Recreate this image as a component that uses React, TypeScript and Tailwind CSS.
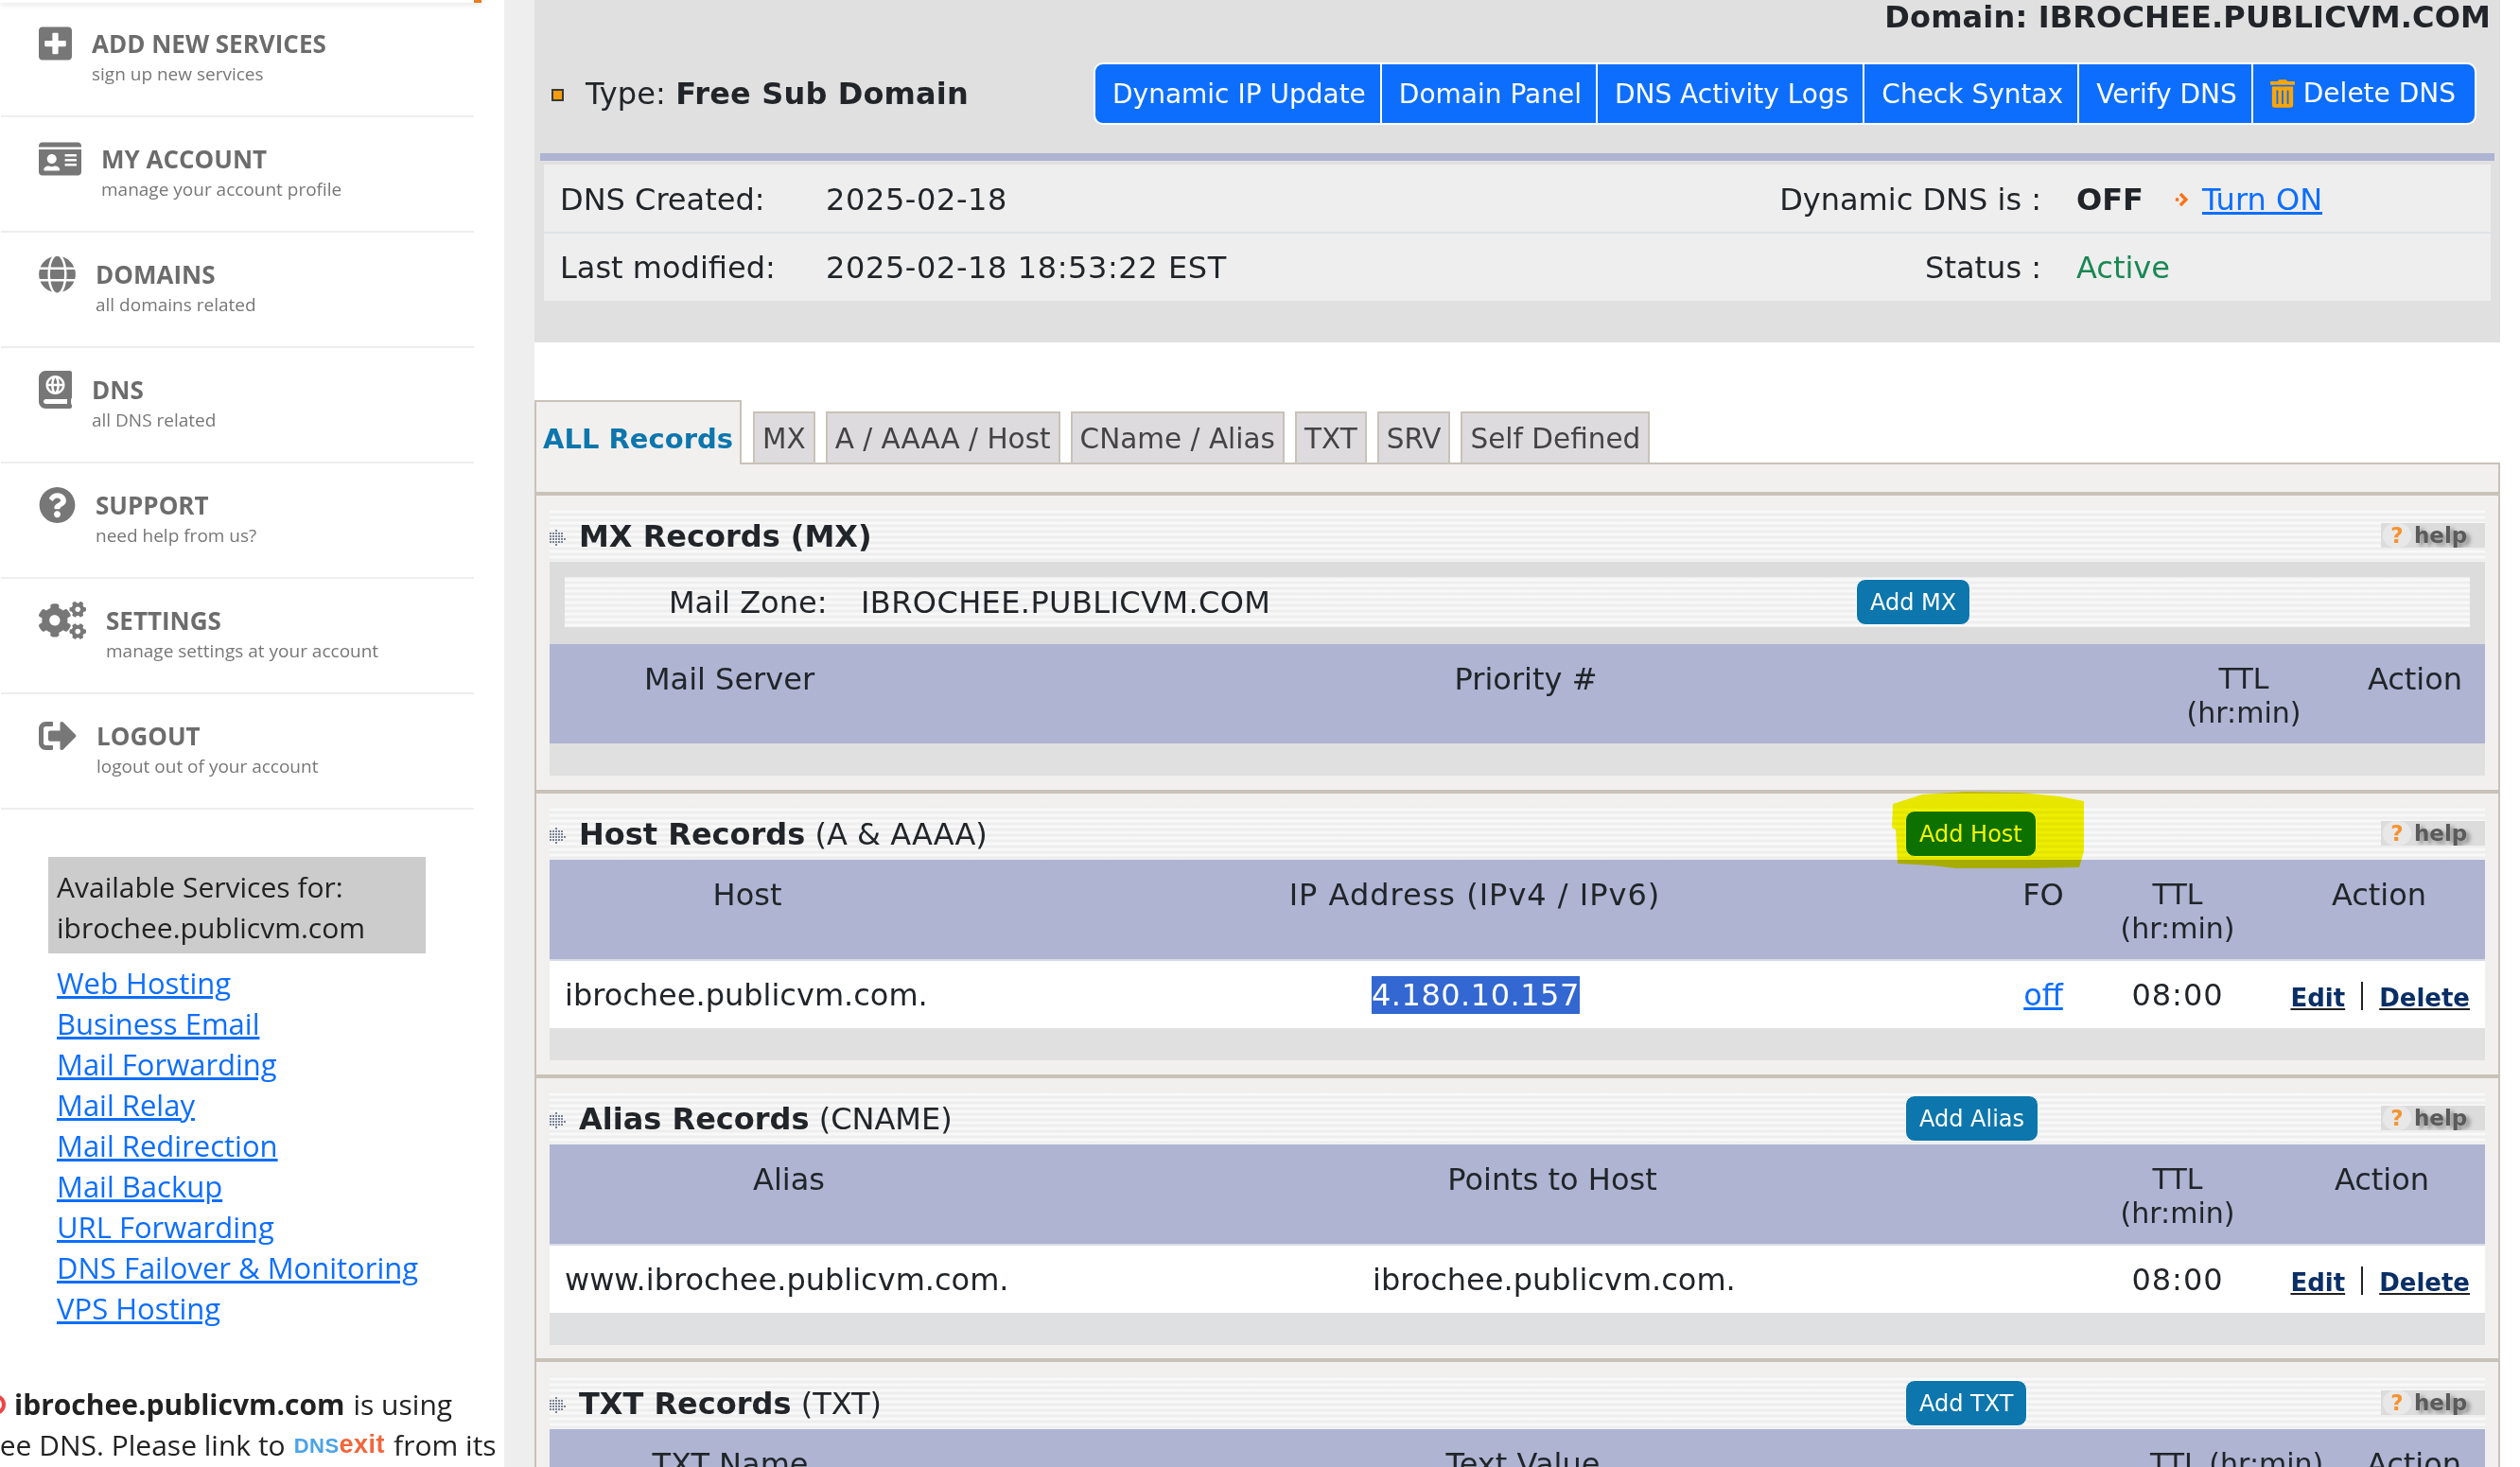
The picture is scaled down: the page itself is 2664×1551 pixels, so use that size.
import React from "react";
import {
  FaPlusSquare,
  FaIdCard,
  FaGlobe,
  FaAtlas,
  FaQuestionCircle,
  FaCogs,
  FaSignOutAlt,
  FaTrashAlt,
} from "react-icons/fa";

const menuItems = [
  { title: "ADD NEW SERVICES", sub: "sign up new services", icon: FaPlusSquare, width: "w-[35px]" },
  { title: "MY ACCOUNT", sub: "manage your account profile", icon: FaIdCard, width: "w-[45px]" },
  { title: "DOMAINS", sub: "all domains related", icon: FaGlobe, width: "w-[39px]" },
  { title: "DNS", sub: "all DNS related", icon: FaAtlas, width: "w-[35px]" },
  { title: "SUPPORT", sub: "need help from us?", icon: FaQuestionCircle, width: "w-[39px]" },
  { title: "SETTINGS", sub: "manage settings at your account", icon: FaCogs, width: "w-[50px]" },
  { title: "LOGOUT", sub: "logout out of your account", icon: FaSignOutAlt, width: "w-[40px]" },
];

const serviceLinks = [
  "Web Hosting",
  "Business Email",
  "Mail Forwarding",
  "Mail Relay",
  "Mail Redirection",
  "Mail Backup",
  "URL Forwarding",
  "DNS Failover & Monitoring",
  "VPS Hosting",
];

const tabs = ["MX", "A / AAAA / Host", "CName / Alias", "TXT", "SRV", "Self Defined"];
const topButtons = ["Dynamic IP Update", "Domain Panel", "DNS Activity Logs", "Check Syntax", "Verify DNS"];

const stripes =
  "bg-[repeating-linear-gradient(180deg,#ebebeb_0px,#fbfbfb_3px,#ebebeb_6px)]";

function Sidebar() {
  return (
    <aside className="w-[533px] h-full shrink-0 bg-white font-['Open_Sans',sans-serif] overflow-hidden">
      <div className="w-[509px] h-[3px] bg-white shadow-[0_1px_6px_rgba(0,0,0,0.18)] flex justify-end">
        <div className="w-[8px] h-[3px] bg-[#e67e22]" />
      </div>
      <div className="ml-px w-[500px]">
        {menuItems.map((item, i) => {
          const Icon = item.icon;
          return (
            <div
              key={item.title}
              className={`flex items-start gap-[21px] pl-[40px] border-b-2 border-[#eeeeee] ${
                i === 0 ? "h-[121px] pt-[23px]" : "h-[122px] pt-[24px]"
              }`}
            >
              <Icon className={`h-10 ${item.width} text-[#777777] shrink-0`} />
              <div className="pt-[4px]">
                <div className="text-[26px] leading-[32px] font-bold text-[#6c6c6c]">{item.title}</div>
                <div className="text-[19px] leading-[32px] text-[#777777]">{item.sub}</div>
              </div>
            </div>
          );
        })}
      </div>

      <div className="ml-[51px] mt-[50px] w-[399px] bg-[#cccccc] px-[9px] pt-[10px] pb-[6px] text-[30px] leading-[43px] text-[#222222]">
        <div>Available Services for:</div>
        <div>ibrochee.publicvm.com</div>
      </div>
      <ul className="ml-[60px] mt-[10px]">
        {serviceLinks.map((s) => (
          <li key={s} className="h-[43px] text-[31px] leading-[43px] whitespace-nowrap">
            <a href="#" className="text-[#0d6efd] underline">
              {s}
            </a>
          </li>
        ))}
      </ul>

      <div className="mt-[59px] text-[30px] leading-[42px] text-[#222222] whitespace-nowrap -ml-[28px]">
        <div className="flex items-center">
          <span className="w-[35px] h-[24px] mr-[8px] shrink-0 flex justify-end">
            <svg viewBox="0 0 24 24" className="w-6 h-6" fill="none" stroke="#ef4444" strokeWidth="4">
              <circle cx="12" cy="12" r="9" />
            </svg>
          </span>
          <b>ibrochee.publicvm.com</b>
          <span className="ml-[9px]">is using</span>
        </div>
        <div className="flex items-center">
          <span>Free DNS. Please link to</span>
          <span className="mx-[9px] font-['Liberation_Sans',sans-serif] font-bold text-[27px] blur-[0.5px] tracking-[0.5px]">
            <span className="text-[#4aa3e8] text-[22px]">DNS</span>
            <span className="text-[#f2653a]">exit</span>
          </span>
          <span>from its</span>
        </div>
      </div>
    </aside>
  );
}

function TopPanel() {
  return (
    <div className="h-[362px] bg-[#e0e0e0] pt-[1px]">
      <div className="h-[35px] pr-[10px] text-right text-[32px] leading-[35px] font-bold tracking-[0.15px]">
        Domain: IBROCHEE.PUBLICVM.COM
      </div>
      <div className="mt-[30px] h-[66px] flex items-center justify-between pl-[18px] pr-[25px]">
        <div className="flex items-center text-[32px] tracking-[0.15px]">
          <span className="w-[13px] h-[13px] bg-[#f59e0b] border-2 border-[#3a3a3a] mr-[23px] mt-[3px]" />
          <span>
            Type: <b>Free Sub Domain</b>
          </span>
        </div>
        <div className="flex h-[66px] border-2 border-white rounded-[10px] bg-[#0d6efd] text-white text-[28px] leading-[64px] overflow-hidden">
          {topButtons.map((b) => (
            <span key={b} className="pl-[18px] pr-[15px] border-r-2 border-white whitespace-nowrap">
              {b}
            </span>
          ))}
          <span className="pl-[18px] pr-[20px] flex items-center gap-[9px] whitespace-nowrap">
            <FaTrashAlt className="h-[30px] w-[26px] text-[#ffa500]" />
            Delete DNS
          </span>
        </div>
      </div>
      <div className="mt-[30px] mx-[6px] h-[8px] bg-[#aeb4d2]" />
      <div className="mt-[4px] mx-[10px] bg-[#eeeeee] text-[32px]">
        <div className="h-[73px] border-b-2 border-[#dee2e6] flex items-center pl-[17px] pt-[2px]">
          <span className="w-[281px]">DNS Created:</span>
          <span className="flex-1 tracking-[0.6px]">2025-02-18</span>
          <span className="pr-[37px]">Dynamic DNS is :</span>
          <span className="w-[438px] flex items-center">
            <b>OFF</b>
            <svg viewBox="0 0 20 20" className="w-[17px] h-[20px] ml-[33px] mr-[12px]" fill="none" stroke="#f97316" strokeWidth="4">
              <path d="M7 3l7 7-7 7" />
              <path d="M1 10h4" />
            </svg>
            <a href="#" className="text-[#0d6efd] underline">
              Turn ON
            </a>
          </span>
        </div>
        <div className="h-[71px] flex items-center pl-[17px]">
          <span className="w-[281px]">Last modified:</span>
          <span className="flex-1 tracking-[0.6px]">2025-02-18 18:53:22 EST</span>
          <span className="pr-[37px]">Status :</span>
          <span className="w-[438px] text-[#198754]">Active</span>
        </div>
      </div>
    </div>
  );
}

function Tabs() {
  return (
    <div className="mt-[61px] h-[68px] flex items-end gap-[11px] border-b-2 border-[#c9c2b8] text-[29.5px]">
      <div className="w-[219px] h-[68px] -mb-[2px] mr-[1px] border-2 border-b-0 border-[#c9c2b8] bg-[#f1f0ee] text-[#0d76ad] text-[29px] font-bold text-center leading-[78px]">
        ALL Records
      </div>
      {tabs.map((t) => (
        <div
          key={t}
          className="h-[54px] px-[8px] border-2 border-b-0 border-[#c9c2b8] bg-[#dddbde] text-[#444444] leading-[54px] whitespace-nowrap"
        >
          {t}
        </div>
      ))}
    </div>
  );
}

const gripRows = ["..#...", "#####.", "#####.", "######", "#####.", "..#..."];

function GripIcon() {
  return (
    <svg viewBox="0 0 18 18" className="w-[18px] h-[18px] shrink-0 mr-[13px] mt-[3px]" fill="#7a8494">
      {gripRows.flatMap((row, y) =>
        row.split("").map((c, x) =>
          c === "#" ? <rect key={`${x}-${y}`} x={x * 3} y={y * 3} width="2" height="2" /> : null
        )
      )}
    </svg>
  );
}

function HelpBadge() {
  return (
    <div className="w-[110px] h-[26px] bg-[#dcdcdc] flex items-center shrink-0 ml-auto font-bold leading-none overflow-hidden">
      <span className="w-[30px] h-[26px] rounded-full bg-[#e8e8e8] text-[#f59331] text-[23px] leading-[26px] text-center blur-[0.4px] ml-[2px]">
        ?
      </span>
      <span className="ml-[3px] text-[23px] text-[#5a5a5a] blur-[0.4px] [text-shadow:4px_3px_4px_#8a8a8a]">help</span>
    </div>
  );
}

function AddButton({ label }: { label: string }) {
  return (
    <button className="h-[49px] px-[14px] pt-[1px] rounded-[10px] border border-white bg-[#0d76ad] text-white text-[24px] whitespace-nowrap">
      {label}
    </button>
  );
}

function SectionTitle({ strong, rest, action }: { strong: string; rest?: string; action?: string }) {
  return (
    <div className={`h-[56px] flex items-center ${stripes}`}>
      <div className="w-[1433px] shrink-0 flex items-center text-[32px] pt-[2px]">
        <GripIcon />
        <span>
          <b>{strong}</b>
          {rest ? ` ${rest}` : ""}
        </span>
      </div>
      {action && <AddButton label={action} />}
      <HelpBadge />
    </div>
  );
}

function TwoLine({ a, b }: { a: string; b: string }) {
  return (
    <div className="text-center text-[30px]">
      <div>{a}</div>
      <div>{b}</div>
    </div>
  );
}

const hostGrid = "grid grid-cols-[418px_1120px_82px_202px_224px]";
const aliasGrid = "grid grid-cols-[506px_1108px_214px_218px]";

function EditDelete() {
  return (
    <div className="flex items-center justify-end pr-[16px] gap-[17px] text-[26px] font-bold text-[#0a2f66] pt-[2px]">
      <a href="#" className="underline decoration-[#222222] mt-[5px]">
        Edit
      </a>
      <span className="w-[2px] h-[30px] bg-[#222222]" />
      <a href="#" className="underline decoration-[#222222] mt-[5px]">
        Delete
      </a>
    </div>
  );
}

function MxSection() {
  return (
    <section className="px-[14px] pt-[14px] pb-[15px] border-b-4 border-[#c9c2b8]">
      <SectionTitle strong="MX Records (MX)" />
      <div className="bg-[#dcdcdc] px-[16px] pt-[16px] pb-[18px]">
        <div className={`h-[53px] flex items-center pl-[110px] text-[32px] ${stripes}`}>
          <span className="w-[203px]">Mail Zone:</span>
          <span className="w-[1052px] tracking-[0.4px]">IBROCHEE.PUBLICVM.COM</span>
          <AddButton label="Add MX" />
        </div>
      </div>
      <div className="h-[105px] bg-[#aeb4d2] grid grid-cols-[380px_1304px_214px_148px] text-[32px] leading-[36px] pt-[19px] text-center">
        <div>Mail Server</div>
        <div>Priority #</div>
        <TwoLine a="TTL" b="(hr:min)" />
        <div>Action</div>
      </div>
      <div className="h-[34px] bg-[#e0e0e0]" />
    </section>
  );
}

function HostSection() {
  return (
    <section className="relative px-[14px] pt-[14px] pb-[15px] border-b-4 border-[#c9c2b8]">
      <SectionTitle strong="Host Records" rest="(A & AAAA)" action="Add Host" />
      <div className={`${hostGrid} h-[107px] bg-[#aeb4d2] border-b-2 border-[#d8dce8] text-[32px] leading-[36px] pt-[19px] text-center`}>
        <div>Host</div>
        <div className="tracking-[1px]">IP Address (IPv4 / IPv6)</div>
        <div>FO</div>
        <TwoLine a="TTL" b="(hr:min)" />
        <div>Action</div>
      </div>
      <div className={`${hostGrid} h-[71px] bg-white items-center text-[32px]`}>
        <div className="pl-[16px]">ibrochee.publicvm.com.</div>
        <div className="pl-[451px]">
          <span className="bg-[#3367d1] text-white py-[1px] tracking-[0.5px]">4.180.10.157</span>
        </div>
        <div className="text-center">
          <a href="#" className="text-[#0d6efd] underline">
            off
          </a>
        </div>
        <div className="text-center tracking-[1px]">08:00</div>
        <EditDelete />
      </div>
      <div className="h-[34px] bg-[#e0e0e0]" />
      {/* yellow marker scribbled over the Add Host button */}
      <svg
        viewBox="0 0 203 81"
        className="absolute left-[1433px] -top-[2px] w-[203px] h-[81px] mix-blend-multiply pointer-events-none"
        fill="#f5f500"
      >
        <path d="M1 13L32 3L78 0L136 1L177 5L203 10L203 63L198 80L146 81L68 81L42 78L6 76L4 40L0 38Z" />
      </svg>
    </section>
  );
}

function AliasSection() {
  return (
    <section className="px-[14px] pt-[14px] pb-[14px] border-b-4 border-[#c9c2b8]">
      <SectionTitle strong="Alias Records" rest="(CNAME)" action="Add Alias" />
      <div className={`${aliasGrid} h-[107px] bg-[#aeb4d2] border-b-2 border-[#d8dce8] text-[32px] leading-[36px] pt-[19px] text-center`}>
        <div>Alias</div>
        <div>Points to Host</div>
        <TwoLine a="TTL" b="(hr:min)" />
        <div>Action</div>
      </div>
      <div className={`${hostGrid} h-[71px] bg-white items-center text-[32px]`}>
        <div className="pl-[16px] whitespace-nowrap">www.ibrochee.publicvm.com.</div>
        <div className="pl-[452px]">ibrochee.publicvm.com.</div>
        <div />
        <div className="text-center tracking-[1px]">08:00</div>
        <EditDelete />
      </div>
      <div className="h-[34px] bg-[#dfe0e1]" />
    </section>
  );
}

function TxtSection() {
  return (
    <section className="px-[14px] pt-[15px]">
      <SectionTitle strong="TXT Records" rest="(TXT)" action="Add TXT" />
      <div className="h-[105px] bg-[#aeb4d2] grid grid-cols-[382px_1294px_226px_138px] text-[32px] leading-[36px] pt-[19px] text-center">
        <div>TXT Name</div>
        <div>Text Value</div>
        <div className="text-left pl-[16px] text-[30px] whitespace-nowrap">TTL (hr:min)</div>
        <div>Action</div>
      </div>
    </section>
  );
}

export default function App() {
  return (
    <div className="w-[2664px] h-[1551px] overflow-hidden flex bg-white text-[#212529] font-['DejaVu_Sans',sans-serif]">
      <Sidebar />
      <div className="w-[32px] h-full shrink-0 bg-[#eeeeee]" />
      <main className="w-[2078px] shrink-0">
        <TopPanel />
        <Tabs />
        <div className="border-x-2 border-[#c9c2b8] bg-[#f1f0ee]">
          <div className="h-[33px] border-b-4 border-[#c9c2b8]" />
          <MxSection />
          <HostSection />
          <AliasSection />
          <TxtSection />
        </div>
      </main>
    </div>
  );
}
